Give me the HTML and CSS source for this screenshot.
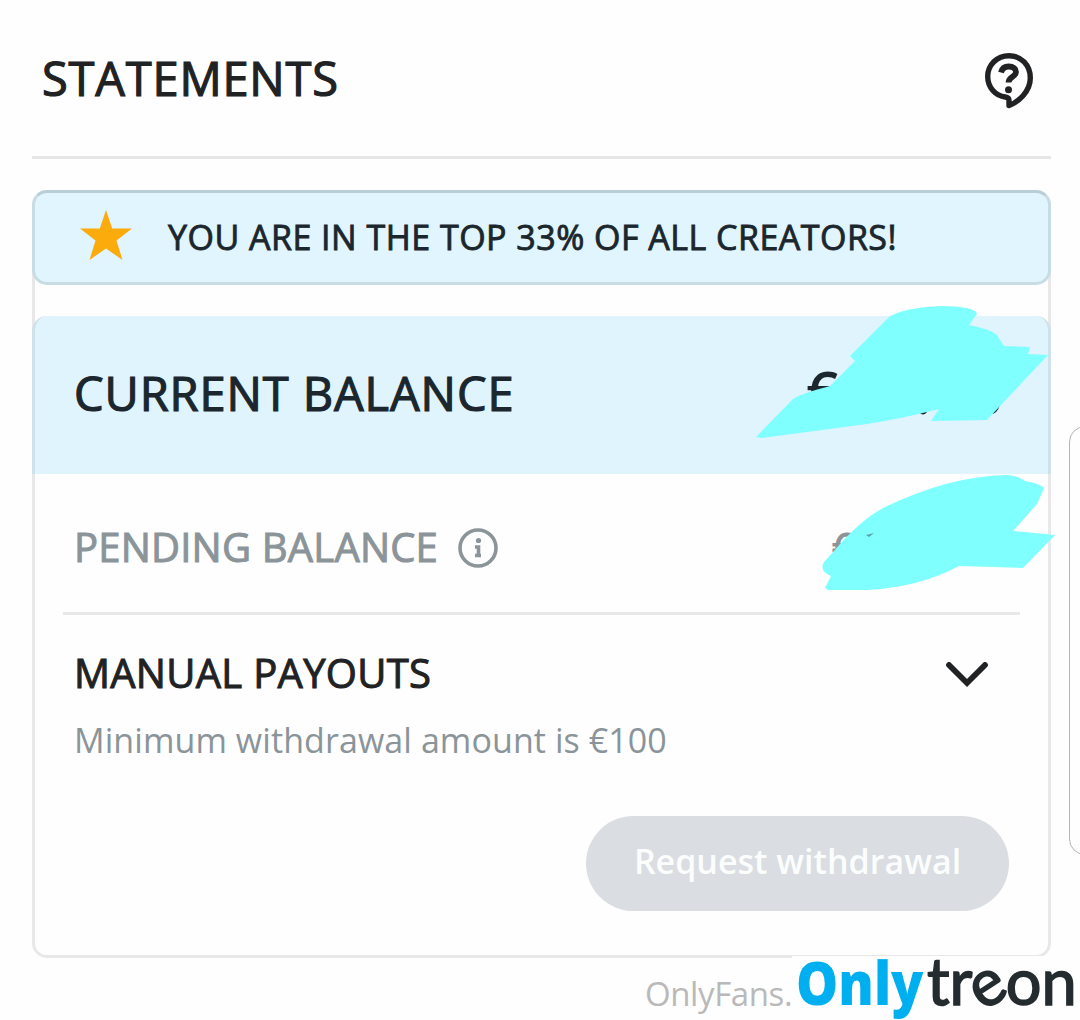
FILE: index.html
```html
<!DOCTYPE html>
<html lang="en">
<head>
    <meta charset="UTF-8">
    <meta name="viewport" content="width=device-width, initial-scale=1.0">
    <title>Statements</title>
    <link rel="stylesheet" href="styles.css">
</head>
<body>
    <div class="page">
        <header class="header">
            <h1 class="title medium">STATEMENTS</h1>
            <svg class="help" viewBox="0 0 50 58" width="50" height="58">
                <path d="M25 3.7C13 3.7 3.7 13 3.7 24.500c0 11 8 19.500 17.500 20.500 2.500.3 3.800 1.500 3.800 3.500v5C34 50 46.300 40 46.300 26 46.300 13 37 3.700 25 3.700z"/>
                <path class="mark" d="M17 20.500c1-4 4-6 7.700-6 4.500 0 7.300 2.200 7.300 5.500 0 5-7.500 5-7.500 10.500"/>
                <circle cx="24.500" cy="37.800" r="3.500"/>
            </svg>
        </header>

        <main class="card">
            <div class="banner">
                <svg class="star" viewBox="0 0 52 50" width="52" height="50">
                    <path d="M26 0l6.200 18.500H52L36.500 30.500 42.500 50 26 38.500 9.500 50l6-19.500L0 18.500h19.800z"/>
                </svg>
                <span class="banner-text medium">YOU ARE IN THE TOP 33% OF ALL CREATORS!</span>
            </div>

            <section class="current">
                <span class="current-label medium">CURRENT BALANCE</span>
                <span class="current-amount">€</span>
            </section>

            <section class="pending">
                <span class="pending-label medium">PENDING BALANCE</span>
                <svg class="info" viewBox="0 0 40 40" width="40" height="40">
                    <circle class="ring" cx="20" cy="20" r="18"/>
                    <circle cx="20.500" cy="12.500" r="2.600"/>
                    <path d="M17 19h3.500v8.500M17 27.500h6"/>
                </svg>
                <span class="pending-amount medium">€</span>
            </section>

            <section class="payouts">
                <div class="payouts-head">
                    <span class="payouts-label medium">MANUAL PAYOUTS</span>
                    <svg class="chevron" viewBox="0 0 42 26" width="42" height="26">
                        <path d="M3 3l18 18L39 3"/>
                    </svg>
                </div>
                <p class="minimum">Minimum withdrawal amount is €100</p>
                <button class="request">Request withdrawal</button>
            </section>
        </main>
    </div>

    <!-- Brush strokes hiding the amounts -->
    <svg class="scribbles" viewBox="0 0 1080 1020" width="1080" height="1020">
        <path class="peek" d="M919 412q4 5 8 0zM991 414q6 0 9-9l-5 1z"/>
        <path d="M756 437L793 399Q800 394 830 386L855 361 850 356 888 318Q900 308 940 306 975 306 977 314L969 325Q990 329 997 335L1004 346 1030 347 1028 354 1048 355 1001 405 987 420 931 421 939 409Q900 419 867 424L762 438z"/>
        <path d="M825 588L831 576Q819 571 824 562L834 551Q860 520 885 507 950 476 1006 475 1016 475 1025 481 1041 484 1044 488L1037 504 1013 531 1055 535 1023 568 959 566Q920 587 868 590L828 590z"/>
        <path class="tick" d="M866 535l8-2-5 4z"/>
    </svg>

    <div class="side-panel"></div>

    <div class="watermark">OnlyFans.</div>
    <div class="logo">
        <span class="only">Only</span>
        <span class="treon">tr<span class="tilt">e</span>on</span>
    </div>
</body>
</html>
```

FILE: styles.css
```css
* {
    box-sizing: border-box;
}
body {
    margin: 0;
    width: 1080px;
    height: 1020px;
    position: relative;
    overflow: hidden;
    background: #fefefe;
    color: #212224;
    font-family: "Open Sans", "Noto Sans", sans-serif;
    font-weight: 400;
    white-space: nowrap;
}
svg {
    display: block;
    flex: none;
}
.page {
    padding: 0 29px 0 32px;
}
/* Open Sans has no medium weight here, thicken the regular one */
.medium {
    -webkit-text-stroke: 0.025em currentColor;
}

/* Header */
.header {
    height: 159px;
    padding: 0 17px 0 10px;
    display: flex;
    justify-content: space-between;
    border-bottom: 3px solid #e6e6e7;
}
.title {
    margin: 46px 0 0;
    font-size: 47px;
    line-height: 64px;
    font-weight: 400;
    letter-spacing: 0.8px;
}
.help {
    margin-top: 52px;
    fill: #212224;
}
.help path {
    fill: none;
    stroke: #212224;
    stroke-width: 5.4;
    stroke-linejoin: round;
}
.help .mark {
    stroke-width: 5.8;
}

/* Card */
.card {
    margin-top: 31px;
    height: 768px;
    border: 3px solid #e8e8e9;
    border-radius: 15px;
}
.banner {
    margin: -3px -3px 31px;
    height: 95px;
    padding: 0 45px;
    display: flex;
    align-items: center;
    border: 3px solid #c8dce3;
    border-top-color: #b9cfd7;
    border-radius: 15px;
    background: #e0f5fd;
    color: #1b262d;
}
.star {
    margin: -5px 0 0;
    fill: #fcab0d;
}
.banner-text {
    margin: -2px 0 0 36px;
    font-size: 34px;
    letter-spacing: 0.48px;
}
.current {
    height: 158px;
    margin: 0 -3px;
    padding: 0 39px 4px;
    display: flex;
    align-items: center;
    border: solid #cfe1e9;
    border-width: 0 3px;
    border-radius: 15px 15px 0 0;
    background: #e0f4fd;
    color: #1b262d;
    font-size: 47px;
}
.current-label {
    letter-spacing: 0.9px;
}
.current-amount {
    margin-left: auto;
    width: 203px;
    font-weight: 600;
    font-size: 56px;
    line-height: 50px;
    padding-bottom: 7px;
}
.pending {
    height: 141px;
    margin: 0 28px;
    padding: 7px 11px 0;
    display: flex;
    align-items: center;
    border-bottom: 3px solid #e8e8e9;
    color: #8a9499;
    font-size: 40px;
}
.pending-label {
    letter-spacing: 0.2px;
}
.info {
    margin: 3px 0 0 20px;
    fill: #8a9499;
}
.info .ring,
.info path {
    fill: none;
    stroke: #8a9499;
    stroke-width: 3.6;
}
.pending-amount {
    margin-left: auto;
    width: 177px;
}
.payouts {
    padding: 31px 39px 0;
    display: flex;
    flex-direction: column;
}
.payouts-head {
    display: flex;
    justify-content: space-between;
    font-size: 40px;
    line-height: 54px;
}
.payouts-label {
    letter-spacing: 0.3px;
}
.chevron {
    margin: 16px 21px 0 0;
}
.chevron path {
    fill: none;
    stroke: #212224;
    stroke-width: 5.8;
    stroke-linecap: round;
}
.minimum {
    margin: 17px 0 0;
    font-size: 34px;
    line-height: 46px;
    letter-spacing: 0.08px;
    color: #8a9499;
}
.request {
    align-self: flex-end;
    width: 423px;
    height: 95px;
    margin: 53px 0 0;
    padding: 0 0 5px;
    border: 0;
    border-radius: 48px;
    background: #dadde1;
    color: #fbfdfd;
    font: 600 34px "Open Sans", "Noto Sans", sans-serif;
}

/* Overlays */
.scribbles {
    position: absolute;
    top: 0;
    left: 0;
    fill: #7ffffe;
}
.scribbles .peek {
    fill: #1b262d;
}
.scribbles .tick {
    fill: #57a5a6;
}
.side-panel {
    position: absolute;
    top: 426px;
    left: 1069px;
    width: 40px;
    height: 429px;
    border: 1.5px solid #b4b4b4;
    border-radius: 16px;
}
.watermark {
    position: absolute;
    top: 971px;
    left: 645px;
    font-size: 33px;
    line-height: 46px;
    letter-spacing: -0.4px;
    color: #b9b9b9;
}
.logo {
    position: absolute;
    top: 956px;
    left: 792px;
    width: 288px;
    height: 64px;
    padding-left: 4px;
    display: flex;
    background: #fefefe;
}
.only {
    width: 131px;
    font-family: "Noto Sans", sans-serif;
    font-weight: 900;
    font-size: 60px;
    line-height: 52px;
    color: #00aff0;
    transform: scaleX(0.885);
    transform-origin: 0 0;
}
.treon {
    font-family: Lato, sans-serif;
    font-size: 66px;
    line-height: 48px;
    color: #242c30;
    -webkit-text-stroke: 1.6px #242c30;
    transform: scaleX(0.955);
    transform-origin: 0 0;
}
.tilt {
    display: inline-block;
    transform: rotate(-32deg);
    transform-origin: 50% 72%;
}
```
